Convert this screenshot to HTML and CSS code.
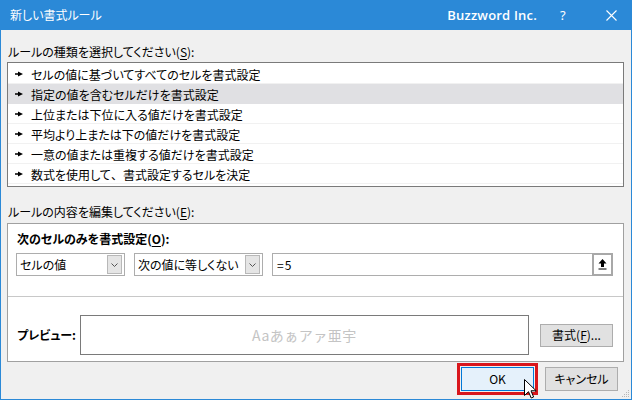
FILE: index.html
```html
<!DOCTYPE html>
<html lang="ja">
<head>
<meta charset="utf-8">
<title>新しい書式ルール</title>
<link rel="stylesheet" href="styles.css">
</head>
<body>
<div class="window">
  <div class="titlebar">
    <span class="title">新しい書式ルール</span>
    <span class="brand">Buzzword Inc.</span>
    <span class="help">?</span>
    <span class="close"><svg width="11" height="11" viewBox="0 0 11 11"><path d="M0.5 0.5L10.5 10.5M10.5 0.5L0.5 10.5" stroke="#fff" stroke-width="1.1" fill="none"/></svg></span>
  </div>
  <div class="content">
    <div class="label">ルールの種類を選択してください(<u>S</u>):</div>
    <ul class="list">
      <li><svg class="bullet" width="8" height="6" viewBox="0 0 8 6"><path d="M0 2.2H3V0.5L8 3L3 5.5V3.8H0Z" fill="#000"/></svg>セルの値に基づいてすべてのセルを書式設定</li>
      <li class="selected"><svg class="bullet" width="8" height="6" viewBox="0 0 8 6"><path d="M0 2.2H3V0.5L8 3L3 5.5V3.8H0Z" fill="#000"/></svg>指定の値を含むセルだけを書式設定</li>
      <li><svg class="bullet" width="8" height="6" viewBox="0 0 8 6"><path d="M0 2.2H3V0.5L8 3L3 5.5V3.8H0Z" fill="#000"/></svg>上位または下位に入る値だけを書式設定</li>
      <li><svg class="bullet" width="8" height="6" viewBox="0 0 8 6"><path d="M0 2.2H3V0.5L8 3L3 5.5V3.8H0Z" fill="#000"/></svg>平均より上または下の値だけを書式設定</li>
      <li><svg class="bullet" width="8" height="6" viewBox="0 0 8 6"><path d="M0 2.2H3V0.5L8 3L3 5.5V3.8H0Z" fill="#000"/></svg>一意の値または重複する値だけを書式設定</li>
      <li><svg class="bullet" width="8" height="6" viewBox="0 0 8 6"><path d="M0 2.2H3V0.5L8 3L3 5.5V3.8H0Z" fill="#000"/></svg>数式を使用して<span class="comma">、</span>書式設定するセルを決定</li>
    </ul>
    <div class="label label2">ルールの内容を編集してください(<u>E</u>):</div>
    <div class="panel">
      <div class="cond">
        <div class="cond-title">次のセルのみを書式設定(<u>O</u>):</div>
        <div class="cond-row">
          <div class="combo combo1"><span class="combo-text">セルの値</span><span class="arrow"><svg width="7" height="4" viewBox="0 0 7 4"><path d="M0.5 0.5L3.5 3.5L6.5 0.5" stroke="#555" fill="none"/></svg></span></div>
          <div class="combo combo2"><span class="combo-text">次の値に等しくない</span><span class="arrow"><svg width="7" height="4" viewBox="0 0 7 4"><path d="M0.5 0.5L3.5 3.5L6.5 0.5" stroke="#555" fill="none"/></svg></span></div>
          <div class="formula"><span class="formula-text">=5</span><span class="ref-btn"><svg width="9" height="11" viewBox="0 0 9 11"><path d="M4.5 0L8.5 4.5H6V8H3V4.5H0.5Z" fill="#000"/><rect x="0.5" y="9.5" width="8" height="1" fill="#000"/></svg></span></div>
        </div>
      </div>
      <div class="preview-row">
        <div class="preview-label">プレビュー:</div>
        <div class="preview-box">Aaあぁアァ亜宇</div>
        <button class="btn btn-format">書式(<u>F</u>)...</button>
      </div>
    </div>
    <div class="buttons">
      <div class="highlight"><button class="btn btn-ok">OK</button></div>
      <button class="btn btn-cancel">キャンセル</button>
    </div>
  </div>
  <svg class="grip" width="8" height="8" viewBox="0 0 8 8"><g fill="#b8b8b8"><rect x="6" y="0" width="1" height="1"/><rect x="4" y="2" width="1" height="1"/><rect x="6" y="2" width="1" height="1"/><rect x="2" y="4" width="1" height="1"/><rect x="4" y="4" width="1" height="1"/><rect x="6" y="4" width="1" height="1"/><rect x="0" y="6" width="1" height="1"/><rect x="2" y="6" width="1" height="1"/><rect x="4" y="6" width="1" height="1"/><rect x="6" y="6" width="1" height="1"/></g></svg>
  <svg class="cursor" width="13" height="21" viewBox="0 0 13 21"><path d="M0.5 0.5V16.5L4.5 12.7L7.2 19L9.6 18L7 11.8H12.2Z" fill="#fff" stroke="#000" stroke-width="1" stroke-linejoin="miter"/></svg>
</div>
</body>
</html>
```
FILE: styles.css
```css
* { box-sizing: border-box; }
html, body { margin: 0; padding: 0; }
body {
  font-family: "Noto Sans CJK JP", "Noto Sans", sans-serif;
  font-size: 12px;
  color: #000;
  background: #f0f0f0;
  font-feature-settings: "palt";
}
.window {
  position: relative;
  width: 632px;
  height: 400px;
  border: 1px solid #2b89d7;
  border-top: none;
  background: #f0f0f0;
  overflow: hidden;
}
.titlebar {
  height: 30px;
  background: #2b89d7;
  color: #fff;
  display: flex;
  align-items: center;
  padding-left: 9px;
}
.title { font-size: 12px; line-height: 16px; flex: 1; }
.brand {
  font-family: "Open Sans", "Noto Sans", sans-serif;
  font-weight: 600;
  font-size: 13px;
  letter-spacing: 0.2px;
}
.help {
  font-family: "Noto Sans", sans-serif;
  font-size: 13px;
  margin-left: 23px;
  width: 10px;
}
.close { margin-left: 36px; margin-right: 14px; display: flex; }
.content { padding: 14px 7px 0 6px; }
.label { line-height: 16px; padding-left: 1px; height: 16px; }
u { text-decoration: underline; text-underline-offset: 2px; }
.list {
  list-style: none;
  margin: 2px 0 0;
  padding: 1px 0 2px;
  background: #fff;
  border: 1px solid #7a7a7a;
}
.list li {
  height: 20px;
  border-bottom: 1px solid #f1f1f1;
  display: flex;
  align-items: center;
  padding-left: 7px;
  line-height: 16px;
  padding-top: 2px;
}
.list li.selected { background: #e0e0e3; border-bottom-color: #e0e0e3; }
.comma { font-feature-settings: normal; }
.bullet { margin-right: 8px; flex: none; margin-top: -2px; }
.label2 { margin-top: 17px; }
.panel {
  margin-top: 3px;
  background: #fff;
  border: 1px solid #a0a0a0;
}
.cond { padding: 7px 10px 20px 8px; }
.cond-title { font-weight: bold; line-height: 16px; padding-left: 1px; }
.cond-row { display: flex; margin-top: 6px; gap: 9px; height: 23px; }
.combo {
  display: flex;
  align-items: center;
  border: 1px solid #adadad;
  background: #fff;
  padding: 1px 1px 1px 3px;
}
.combo1 { width: 109px; }
.combo2 { width: 129px; }
.combo-text { flex: 1; line-height: 16px; }
.arrow {
  width: 15px;
  height: 19px;
  background: #e5e5e5;
  border: 1px solid #b8b8b8;
  display: flex;
  align-items: center;
  justify-content: center;
  margin-right: 1px;
}
.formula {
  flex: 1;
  display: flex;
  align-items: center;
  border: 1px solid #adadad;
  padding-left: 4px;
}
.formula-text { flex: 1; line-height: 16px; letter-spacing: 1px; }
.ref-btn {
  width: 21px;
  height: 23px;
  margin: -1px -1px -1px 0;
  border: 2px solid #a8a8a8;
  background: #fff;
  display: flex;
  align-items: center;
  justify-content: center;
}
.preview-row {
  border-top: 1px solid #c8c8c8;
  display: flex;
  align-items: center;
  padding: 18px 10px 6px 9px;
}
.preview-label { width: 63px; font-weight: bold; line-height: 16px; }
.preview-box {
  flex: 1;
  height: 40px;
  border: 1px solid #7a7a7a;
  display: flex;
  align-items: center;
  justify-content: center;
  color: #c4c4c4;
  font-size: 14px;
  font-feature-settings: normal;
  letter-spacing: 0.5px;
}
.btn {
  font-family: inherit;
  font-size: 12px;
  font-feature-settings: "palt";
  color: #000;
  background: #e1e1e1;
  border: 1px solid #adadad;
  padding: 0;
  width: 73px;
  height: 24px;
  line-height: 16px;
}
.btn-format { margin-left: 11px; height: 23px; }
.buttons {
  display: flex;
  justify-content: flex-end;
  align-items: center;
  gap: 7px;
  margin-top: 1px;
  padding-right: 6px;
}
.highlight { border: 3px solid #d9161c; padding: 1px; display: flex; }
.btn-ok { background: #e5f1fb; border-color: #0078d7; }
.grip { position: absolute; right: 1px; bottom: 1px; }
.cursor { position: absolute; left: 523px; top: 379px; }
```
